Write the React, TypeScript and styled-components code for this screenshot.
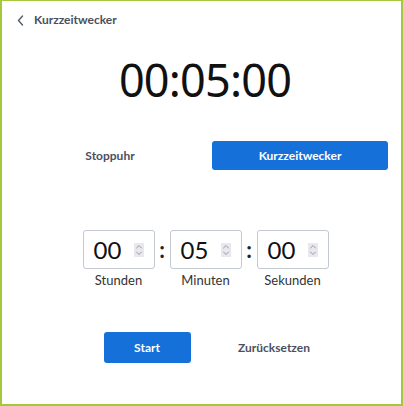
import React, { useState } from "react";
import styled, { createGlobalStyle } from "styled-components";

const GlobalStyle = createGlobalStyle`
  html, body {
    margin: 0;
    padding: 0;
    background: #ffffff;
  }
  body {
    font-family: Lato, "Noto Sans", sans-serif;
  }
`;

const Frame = styled.div`
  box-sizing: border-box;
  width: 403px;
  height: 406px;
  border-style: solid;
  border-color: #a3c83a;
  border-width: 1px 2px 2px 2px;
  background: #ffffff;
  display: flex;
  flex-direction: column;
`;

const Header = styled.div`
  height: 37px;
  display: flex;
  align-items: center;
  gap: 10px;
  padding-left: 15px;
  font-size: 12px;
  font-weight: 700;
  color: #4a505e;
`;

const BackIcon = styled.svg`
  width: 7px;
  height: 11px;
  margin-top: 1px;
`;

const Display = styled.div`
  margin-top: 12px;
  height: 60px;
  line-height: 60px;
  padding-left: 7px;
  text-align: center;
  font-family: "Noto Sans", sans-serif;
  font-size: 45px;
  letter-spacing: -0.8px;
  color: #111111;
`;

const Tabs = styled.div`
  margin-top: 31px;
  padding: 0 13px 0 20px;
  display: grid;
  grid-template-columns: 1fr 1fr;
  gap: 14px;
`;

const Tab = styled.button<{ $active?: boolean }>`
  height: 29px;
  border: none;
  border-radius: 3px;
  font-family: Lato, "Noto Sans", sans-serif;
  font-size: 12px;
  font-weight: 700;
  cursor: pointer;
  color: ${(p) => (p.$active ? "#ffffff" : "#4a505e")};
  background: ${(p) => (p.$active ? "#1570da" : "transparent")};
`;

const Fields = styled.div`
  margin-top: 60px;
  padding-left: 8px;
  display: flex;
  justify-content: center;
`;

const Field = styled.div`
  width: 72px;
  display: flex;
  flex-direction: column;
  align-items: center;
`;

const Box = styled.div`
  box-sizing: border-box;
  width: 72px;
  height: 39px;
  border: 1px solid #c3c8d1;
  border-radius: 3px;
  display: flex;
  align-items: center;
  justify-content: space-between;
  padding: 0 10px 0 10px;
`;

const Value = styled.span`
  font-size: 24px;
  color: #111111;
`;

const Spinner = styled.div`
  width: 10px;
  height: 14px;
  background: #e8e8ee;
  display: flex;
  align-items: center;
  justify-content: center;
`;

const Label = styled.div`
  margin-top: 3px;
  line-height: 16px;
  font-size: 13px;
  color: #333333;
`;

const Sep = styled.div`
  width: 15px;
  height: 39px;
  display: flex;
  align-items: center;
  justify-content: center;
  font-size: 22px;
  font-weight: 700;
  color: #222222;
`;

const Actions = styled.div`
  margin-top: 44px;
  padding-left: 18px;
  display: flex;
  justify-content: center;
  gap: 40px;
`;

const Action = styled.button<{ $primary?: boolean }>`
  width: 87px;
  height: 31px;
  border: none;
  border-radius: 3px;
  font-family: Lato, "Noto Sans", sans-serif;
  font-size: 12px;
  font-weight: 700;
  cursor: pointer;
  color: ${(p) => (p.$primary ? "#ffffff" : "#4a505e")};
  background: ${(p) => (p.$primary ? "#1570da" : "transparent")};
  white-space: nowrap;
`;

function SpinIcon() {
  return (
    <svg width="8" height="12" viewBox="0 0 8 12" fill="none" stroke="#959aa4" strokeWidth="1" strokeLinecap="round" strokeLinejoin="round">
      <polyline points="1.5,4 4,1.5 6.5,4" />
      <polyline points="1.5,8 4,10.5 6.5,8" />
    </svg>
  );
}

const pad = (n: number) => String(n).padStart(2, "0");

export default function App() {
  const [mode, setMode] = useState<"stopwatch" | "timer">("timer");
  const [parts] = useState({ h: 0, m: 5, s: 0 });
  const fields = [
    { key: "h", label: "Stunden", value: parts.h },
    { key: "m", label: "Minuten", value: parts.m },
    { key: "s", label: "Sekunden", value: parts.s },
  ];

  return (
    <>
      <GlobalStyle />
      <Frame>
        <Header>
          <BackIcon viewBox="0 0 7 11" fill="none" stroke="#555b66" strokeWidth="1.4" strokeLinecap="round" strokeLinejoin="round">
            <polyline points="5.5,1 1.5,5.5 5.5,10" />
          </BackIcon>
          <span>Kurzzeitwecker</span>
        </Header>
        <Display>
          {pad(parts.h)}:{pad(parts.m)}:{pad(parts.s)}
        </Display>
        <Tabs>
          <Tab $active={mode === "stopwatch"} onClick={() => setMode("stopwatch")}>
            Stoppuhr
          </Tab>
          <Tab $active={mode === "timer"} onClick={() => setMode("timer")}>
            Kurzzeitwecker
          </Tab>
        </Tabs>
        <Fields>
          {fields.map((f, i) => (
            <React.Fragment key={f.key}>
              {i > 0 && <Sep>:</Sep>}
              <Field>
                <Box>
                  <Value>{pad(f.value)}</Value>
                  <Spinner>
                    <SpinIcon />
                  </Spinner>
                </Box>
                <Label>{f.label}</Label>
              </Field>
            </React.Fragment>
          ))}
        </Fields>
        <Actions>
          <Action $primary>Start</Action>
          <Action>Zurücksetzen</Action>
        </Actions>
      </Frame>
    </>
  );
}
